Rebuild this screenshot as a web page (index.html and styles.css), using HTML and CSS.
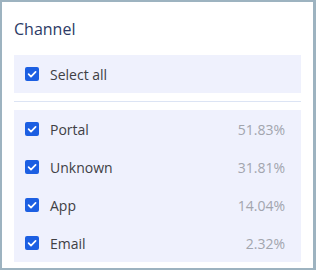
FILE: index.html
```html
<!DOCTYPE html>
<html>
<head>
<meta charset="utf-8">
<link rel="stylesheet" href="styles.css">
</head>
<body>
<div class="card">
  <div class="title">Channel</div>
  <div class="group">
    <label class="row">
      <span class="check"><svg viewBox="0 0 14 14" width="14" height="14"><path d="M3.6 7.2 L6 9.6 L10.6 4.8" fill="none" stroke="#fff" stroke-width="1.7" stroke-linecap="round" stroke-linejoin="round"/></svg></span>
      <span class="label">Select all</span>
    </label>
  </div>
  <div class="divider"></div>
  <div class="group">
    <label class="row">
      <span class="check"><svg viewBox="0 0 14 14" width="14" height="14"><path d="M3.6 7.2 L6 9.6 L10.6 4.8" fill="none" stroke="#fff" stroke-width="1.7" stroke-linecap="round" stroke-linejoin="round"/></svg></span>
      <span class="label">Portal</span>
      <span class="pct">51.83%</span>
    </label>
    <label class="row">
      <span class="check"><svg viewBox="0 0 14 14" width="14" height="14"><path d="M3.6 7.2 L6 9.6 L10.6 4.8" fill="none" stroke="#fff" stroke-width="1.7" stroke-linecap="round" stroke-linejoin="round"/></svg></span>
      <span class="label">Unknown</span>
      <span class="pct">31.81%</span>
    </label>
    <label class="row">
      <span class="check"><svg viewBox="0 0 14 14" width="14" height="14"><path d="M3.6 7.2 L6 9.6 L10.6 4.8" fill="none" stroke="#fff" stroke-width="1.7" stroke-linecap="round" stroke-linejoin="round"/></svg></span>
      <span class="label">App</span>
      <span class="pct">14.04%</span>
    </label>
    <label class="row">
      <span class="check"><svg viewBox="0 0 14 14" width="14" height="14"><path d="M3.6 7.2 L6 9.6 L10.6 4.8" fill="none" stroke="#fff" stroke-width="1.7" stroke-linecap="round" stroke-linejoin="round"/></svg></span>
      <span class="label">Email</span>
      <span class="pct">2.32%</span>
    </label>
  </div>
</div>
</body>
</html>
```

FILE: styles.css
```css
html, body {
  margin: 0;
  padding: 0;
  background: #ffffff;
}
body {
  font-family: "Open Sans", "Noto Sans", sans-serif;
}
.card {
  box-sizing: border-box;
  width: 316px;
  height: 270px;
  border: 2px solid #9db3c0;
  border-right-width: 3px;
  background: #ffffff;
  padding: 16px 12px 0 12px;
}
.title {
  font-size: 16px;
  line-height: 22px;
  color: #2c3a66;
  margin-bottom: 15px;
}
.group {
  background: #eff1fd;
}
.row {
  display: flex;
  align-items: center;
  height: 38px;
  padding: 0 16px 0 11px;
  font-size: 14px;
  line-height: 20px;
}
.check {
  display: block;
  width: 14px;
  height: 14px;
  border-radius: 2px;
  background: #1c5fe2;
  margin-right: 11px;
  flex: none;
}
.check svg {
  display: block;
}
.label {
  color: #404044;
  flex: 1;
  padding-top: 2px;
}
.pct {
  color: #a2a5ae;
  padding-top: 2px;
}
.divider {
  height: 1px;
  background: #dce4f4;
  margin: 8px 0;
}
```
